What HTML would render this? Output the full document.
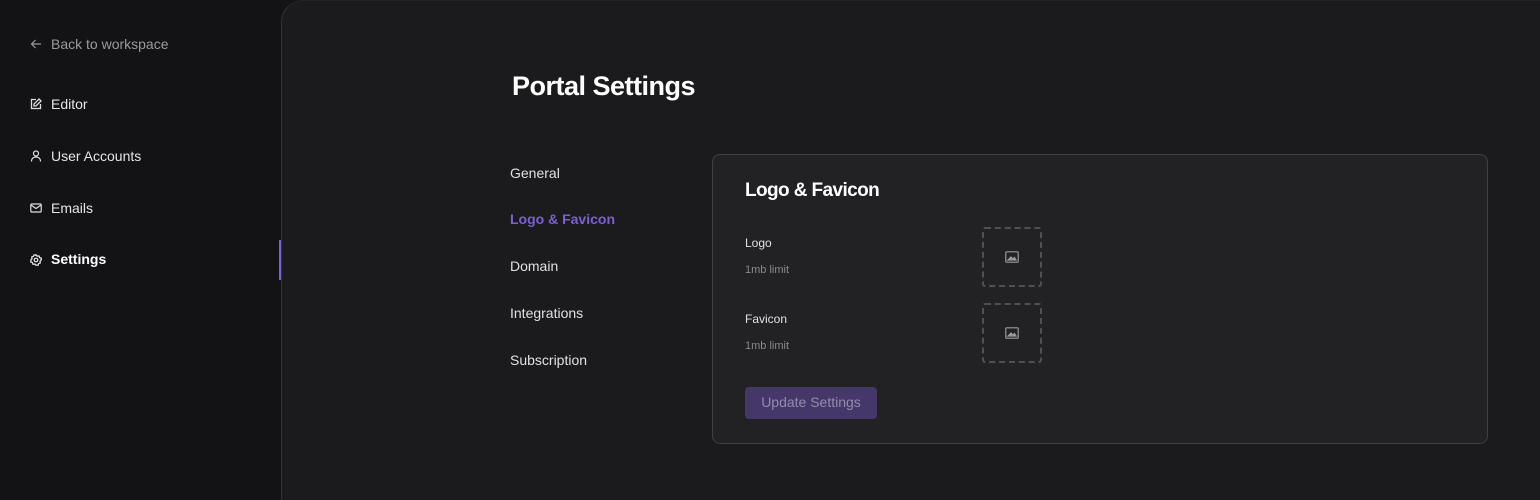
<!DOCTYPE html>
<html><head><style>
*{margin:0;padding:0;box-sizing:border-box}
body{width:1540px;height:492px;background:#131315;font-family:"Liberation Sans",sans-serif;position:relative;overflow:hidden;color:#e6e6e6}
.a{position:absolute;white-space:nowrap}
.side{font-size:14px;color:#e4e4e4}
.main{position:absolute;left:281px;top:0;width:1259px;height:500px;background:#1b1b1d;border-left:1px solid #333336;border-top:1px solid #232326;border-top-left-radius:22px}
.card{position:absolute;left:712px;top:154px;width:776px;height:290px;background:#222224;border:1px solid #404044;border-radius:8px}
.box{position:absolute;width:60px;height:60px;border:2px dashed #505054;border-radius:3px}
svg{position:absolute}
</style></head><body>
<svg style="left:30px;top:38px" width="12" height="12" viewBox="0 0 12 12" fill="none" stroke="#999" stroke-width="1.2"><path d="M11 6H1.5M5.5 2L1.5 6l4 4"/></svg>
<div class="a side" style="left:51px;top:36px;color:#9a9a9e">Back to workspace</div>
<svg style="left:30px;top:98px" width="12" height="12" viewBox="0 0 12 12" fill="none" stroke="#ddd" stroke-width="1.3"><path d="M6 1.5H1.5v9h9V6"/><path d="M9 1l2 2-5 5H4V6z"/></svg>
<div class="a side" style="left:51px;top:96px">Editor</div>
<svg style="left:30px;top:150px" width="12" height="12" viewBox="0 0 12 12" fill="none" stroke="#ddd" stroke-width="1.2"><circle cx="6" cy="3.5" r="2.5"/><path d="M1.5 11.5c0-3 2-4.5 4.5-4.5s4.5 1.5 4.5 4.5"/></svg>
<div class="a side" style="left:51px;top:148px">User Accounts</div>
<svg style="left:30px;top:202px" width="12" height="12" viewBox="0 0 12 12" fill="none" stroke="#ddd" stroke-width="1.2"><rect x="0.8" y="2" width="10.4" height="8" rx="1"/><path d="M1 3l5 3.5L11 3"/></svg>
<div class="a side" style="left:51px;top:200px">Emails</div>
<svg style="left:30px;top:254px" width="12" height="12" viewBox="0 0 12 12" fill="none" stroke="#eee" stroke-width="1.2"><circle cx="6" cy="6" r="1.8"/><path d="M6 0.8l1.2 1.4 1.8-.3.6 1.7 1.7.6-.3 1.8L11.2 6 10 7.2l.3 1.8-1.7.6-.6 1.7-1.8-.3L6 11.2 4.8 10 3 10.3l-.6-1.7-1.7-.6.3-1.8L0.8 6 2 4.8 1.7 3l1.7-.6L4 .9l1.8.3z"/></svg>
<div class="a side" style="left:51px;top:251px;font-weight:bold;color:#fff">Settings</div>
<div class="main"></div>
<div class="a" style="left:279px;top:240px;width:2px;height:40px;background:#7b5fd6"></div>
<div class="a" style="left:512px;top:71px;font-size:27px;font-weight:bold;color:#fff;letter-spacing:-0.5px">Portal Settings</div>
<div class="a" style="left:510px;top:165px;font-size:14px;color:#e0e0e0">General</div>
<div class="a" style="left:510px;top:211px;font-size:14px;font-weight:bold;color:#7c5fd3">Logo &amp; Favicon</div>
<div class="a" style="left:510px;top:258px;font-size:14px;color:#e0e0e0">Domain</div>
<div class="a" style="left:510px;top:305px;font-size:14px;color:#e0e0e0">Integrations</div>
<div class="a" style="left:510px;top:352px;font-size:14px;color:#e0e0e0">Subscription</div>
<div class="card"></div>
<div class="a" style="left:745px;top:180px;font-size:19px;font-weight:bold;color:#fff;letter-spacing:-0.6px">Logo &amp; Favicon</div>
<div class="a" style="left:745px;top:236px;font-size:12px;color:#e0e0e0">Logo</div>
<div class="a" style="left:745px;top:264px;font-size:11px;color:#8a8a8e">1mb limit</div>
<div class="a" style="left:745px;top:312px;font-size:12px;color:#e0e0e0">Favicon</div>
<div class="a" style="left:745px;top:340px;font-size:11px;color:#8a8a8e">1mb limit</div>
<div class="box" style="left:982px;top:227px"></div>
<div class="box" style="left:982px;top:303px"></div>
<svg style="left:1005px;top:251px" width="14" height="12" viewBox="0 0 14 12" fill="none" stroke="#999" stroke-width="1.2"><rect x="0.8" y="0.8" width="12.4" height="10.4" rx="1"/><path d="M3 9l3-3 2 2 1.5-1.5L11 9z" fill="#999"/></svg>
<svg style="left:1005px;top:327px" width="14" height="12" viewBox="0 0 14 12" fill="none" stroke="#999" stroke-width="1.2"><rect x="0.8" y="0.8" width="12.4" height="10.4" rx="1"/><path d="M3 9l3-3 2 2 1.5-1.5L11 9z" fill="#999"/></svg>
<div class="a" style="left:745px;top:387px;width:132px;height:32px;background:#453769;border-radius:4px;font-size:14px;color:#938cab;text-align:center;line-height:31px">Update Settings</div>
</body></html>
